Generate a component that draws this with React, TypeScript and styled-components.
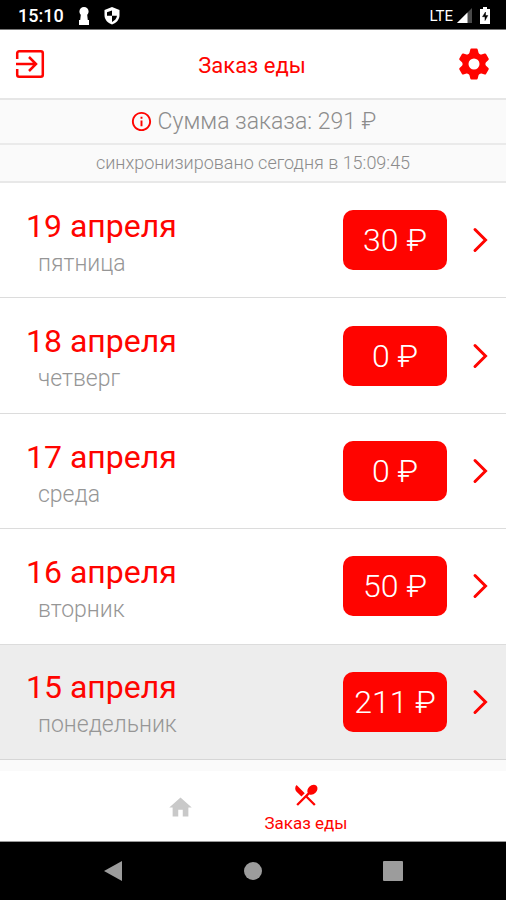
import React from "react";
import styled, { createGlobalStyle } from "styled-components";
import { MdHome, MdInfoOutline, MdRestaurantMenu } from "react-icons/md";

const RED = "#ff0400";

const GlobalStyle = createGlobalStyle`
  *, *::before, *::after { box-sizing: border-box; }
  body { margin: 0; background: #fafafa; font-family: Roboto, "Noto Sans", sans-serif; }
  button { font: inherit; border: 0; padding: 0; background: none; cursor: pointer; }
  svg { display: block; flex: none; }
`;

const Screen = styled.div`
  display: flex;
  flex-direction: column;
  min-height: 100vh;
`;

const StatusBar = styled.div`
  display: flex;
  align-items: center;
  justify-content: space-between;
  height: 30px;
  padding: 2px 16px 0 18px;
  background: #000;
  border-bottom: 1px solid #777;
  color: #fff;
`;

const StatusGroup = styled.div<{ $gap: number }>`
  display: flex;
  align-items: center;
  gap: ${({ $gap }) => $gap}px;
`;

const Clock = styled.time`
  font-size: 18px;
  font-weight: 500;
  line-height: 24px;
`;

const Network = styled.span`
  font-size: 15px;
  line-height: 24px;
`;

const Header = styled.header`
  display: grid;
  grid-template-columns: 36px 1fr 36px;
  align-items: center;
  height: 70px;
  padding: 0 14px 0 12px;
  background: #fff;
  border-bottom: 2px solid #e6e6e6;
`;

const IconButton = styled.button`
  display: flex;
  justify-content: center;
  color: ${RED};
`;

const Title = styled.h1`
  margin: 0;
  padding-top: 4px;
  color: ${RED};
  font-size: 22px;
  font-weight: 400;
  line-height: 28px;
  text-align: center;
`;

const Total = styled.div`
  display: flex;
  align-items: center;
  justify-content: center;
  gap: 5px;
  height: 45px;
  border-bottom: 2px solid #eaeaea;
  color: #8c8c8c;
  font-size: 23px;
  font-weight: 300;

  svg { color: ${RED}; }
`;

const Synced = styled.div`
  height: 38px;
  border-bottom: 2px solid #e8e8e8;
  color: #8c8c8c;
  font-size: 18px;
  font-weight: 300;
  line-height: 36px;
  text-align: center;
`;

const DayList = styled.ul`
  display: flex;
  flex: 1;
  flex-direction: column;
  margin: 0 0 11px;
  padding: 0;
  list-style: none;
`;

const DayItem = styled.li<{ $active: boolean }>`
  display: flex;
  flex: 1;
  background: ${({ $active }) => ($active ? "#ededed" : "#fff")};
  border-bottom: 1px solid ${({ $active }) => ($active ? "#d6d6d6" : "#dcdcdc")};
`;

const DayButton = styled.button`
  display: flex;
  flex: 1;
  align-items: center;
  min-height: 112px;
  padding: 0 18px 0 26px;
  text-align: left;
`;

const DayText = styled.span`
  display: flex;
  flex: 1;
  flex-direction: column;
  padding-top: 7px;
`;

const DayDate = styled.span`
  color: ${RED};
  font-size: 32px;
  line-height: 40px;
`;

const Weekday = styled.span`
  padding-left: 12px;
  color: #969696;
  font-size: 23px;
  font-weight: 300;
  line-height: 36px;
`;

const Price = styled.span`
  width: 104px;
  margin-right: 25px;
  border-radius: 10px;
  background: ${RED};
  color: #fff;
  font-size: 32px;
  font-weight: 300;
  line-height: 60px;
  text-align: center;
`;

const TabBar = styled.nav`
  display: flex;
  justify-content: center;
  height: 71px;
  padding-right: 20px;
  background: #fff;
  border-bottom: 1px solid #999;
`;

const Tab = styled.button<{ $active?: boolean }>`
  display: flex;
  flex: 0 1 126px;
  flex-direction: column;
  align-items: center;
  justify-content: center;
  gap: 3px;
  padding-top: 2px;
  color: ${({ $active }) => ($active ? RED : "#c9c9c9")};
  font-size: 17px;
  line-height: 22px;
`;

const SystemBar = styled.div`
  display: flex;
  justify-content: center;
  gap: 120px;
  align-items: center;
  height: 58px;
  background: #000;
`;

const SystemButton = styled.button`
  color: #9c9c9c;
`;

const days = [
  { date: "19 апреля", weekday: "пятница", price: 30 },
  { date: "18 апреля", weekday: "четверг", price: 0 },
  { date: "17 апреля", weekday: "среда", price: 0 },
  { date: "16 апреля", weekday: "вторник", price: 50 },
  { date: "15 апреля", weekday: "понедельник", price: 211, active: true },
];

const KeyholeIcon = () => (
  <svg width="10" height="18" viewBox="0 0 10 18" fill="currentColor">
    <path d="M5 0a4.600 4.600 0 0 1 4.600 4.600c0 1.600-.8 2.600-1.400 3.200L8.800 13H10v5H0v-5h1.200l.6-5.200C1.200 7.200.4 6.200.4 4.600A4.600 4.600 0 0 1 5 0z" />
  </svg>
);

const ShieldIcon = () => (
  <svg width="16" height="18" viewBox="0 0 16 18">
    <path d="M8 0l7.500 3v5c0 4.500-3 8-7.500 9.500C3.500 16 .5 12.500.5 8V3z" fill="currentColor" />
    <path d="M8 3.500V8.700H3V5.200zM8 8.700h5c-.4 2.800-2.300 5-5 6.200z" fill="#000" />
  </svg>
);

const SignalIcon = () => (
  <svg width="15" height="15" viewBox="0 0 15 15">
    <path d="M15 0v15H0z" fill="#4a4a4a" />
    <path d="M10.500 4.500V15H0z" fill="currentColor" />
  </svg>
);

const BatteryIcon = () => (
  <svg width="10" height="17" viewBox="0 0 10 17">
    <path d="M3 0h4v2h3v15H0V2h3z" fill="currentColor" />
    <path d="M5.500 5L2.500 9.700H5v3.800l2.800-5H5.500z" fill="#000" stroke="#000" strokeWidth=".5" />
  </svg>
);

const ExitIcon = () => (
  <svg width="30" height="30" viewBox="0 0 30 30" fill="none" stroke="currentColor" strokeWidth="2.500">
    <path d="M2.200 10V4.200a2 2 0 0 1 2-2h21.600a2 2 0 0 1 2 2v21.600a2 2 0 0 1-2 2H4.200a2 2 0 0 1-2-2V20" />
    <path d="M1 15h19.500M14 8l7 7-7 7" />
  </svg>
);

const GearIcon = () => (
  <svg width="32" height="32" viewBox="-16 -16 32 32" fill="currentColor">
    <circle r="8.500" fill="none" stroke="currentColor" strokeWidth="6" />
    {[0, 60, 120, 180, 240, 300].map((angle) => (
      <path
        key={angle}
        d="M-5-9.500L-3.700-14.500Q-3.500-15.400-2.600-15.400H2.600Q3.500-15.400 3.700-14.500L5-9.500z"
        transform={`rotate(${angle})`}
      />
    ))}
  </svg>
);

const ChevronIcon = () => (
  <svg width="16" height="26" viewBox="0 0 16 26" fill="none" stroke={RED} strokeWidth="3" strokeLinecap="round">
    <path d="M3 2.500L13.500 13 3 23.500" />
  </svg>
);

export default function App() {
  return (
    <Screen>
      <GlobalStyle />
      <StatusBar>
        <StatusGroup $gap={15}>
          <Clock>15:10</Clock>
          <KeyholeIcon />
          <ShieldIcon />
        </StatusGroup>
        <StatusGroup $gap={4}>
          <Network>LTE</Network>
          <StatusGroup $gap={8}>
            <SignalIcon />
            <BatteryIcon />
          </StatusGroup>
        </StatusGroup>
      </StatusBar>
      <Header>
        <IconButton aria-label="Выйти">
          <ExitIcon />
        </IconButton>
        <Title>Заказ еды</Title>
        <IconButton aria-label="Настройки">
          <GearIcon />
        </IconButton>
      </Header>
      <Total>
        <MdInfoOutline size={23} />
        <span>Сумма заказа: 291 ₽</span>
      </Total>
      <Synced>синхронизировано сегодня в 15:09:45</Synced>
      <DayList>
        {days.map((day) => (
          <DayItem key={day.date} $active={!!day.active}>
            <DayButton>
              <DayText>
                <DayDate>{day.date}</DayDate>
                <Weekday>{day.weekday}</Weekday>
              </DayText>
              <Price>{day.price} ₽</Price>
              <ChevronIcon />
            </DayButton>
          </DayItem>
        ))}
      </DayList>
      <TabBar>
        <Tab aria-label="Главная">
          <MdHome size={27} />
        </Tab>
        <Tab $active aria-current="page">
          <MdRestaurantMenu size={28} />
          Заказ еды
        </Tab>
      </TabBar>
      <SystemBar>
        <SystemButton aria-label="Назад">
          <svg width="20" height="22" viewBox="0 0 20 22" fill="currentColor">
            <path d="M19 1v20L1 11z" />
          </svg>
        </SystemButton>
        <SystemButton aria-label="Домой">
          <svg width="20" height="20" viewBox="0 0 20 20" fill="currentColor">
            <circle cx="10" cy="10" r="9" />
          </svg>
        </SystemButton>
        <SystemButton aria-label="Недавние">
          <svg width="20" height="20" viewBox="0 0 20 20" fill="currentColor">
            <rect width="20" height="20" rx="1" />
          </svg>
        </SystemButton>
      </SystemBar>
    </Screen>
  );
}
